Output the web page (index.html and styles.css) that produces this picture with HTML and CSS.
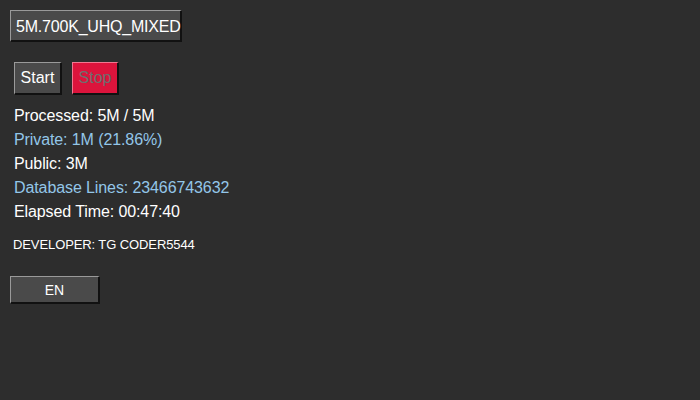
FILE: index.html
```html
<!DOCTYPE html>
<html>
<head>
<meta charset="utf-8">
<link rel="stylesheet" href="styles.css">
</head>
<body>
<div class="app">
  <div class="field">5M.700K_UHQ_MIXED</div>
  <div class="controls">
    <button class="btn start">Start</button>
    <button class="btn stop" disabled>Stop</button>
  </div>
  <div class="stats">
    <div class="line white">Processed: 5M / 5M</div>
    <div class="line blue">Private: 1M (21.86%)</div>
    <div class="line white">Public: 3M</div>
    <div class="line blue">Database Lines: 23466743632</div>
    <div class="line white">Elapsed Time: 00:47:40</div>
  </div>
  <div class="dev">DEVELOPER: TG CODER5544</div>
  <button class="lang">EN</button>
</div>
</body>
</html>
```
FILE: styles.css
```css
html, body {
  margin: 0;
  padding: 0;
  background: #2d2d2d;
  height: 100%;
}
body {
  font-family: "Liberation Sans", Arial, sans-serif;
  color: #ffffff;
}
.app {
  display: flex;
  flex-direction: column;
  align-items: flex-start;
  padding: 10px;
}
.field {
  box-sizing: border-box;
  width: 172px;
  height: 32px;
  background: #4a4a4a;
  border-style: solid;
  border-width: 1px 2px 2px 1px;
  border-color: #9a9a9a #111111 #111111 #9a9a9a;
  font-size: 16px;
  letter-spacing: -0.2px;
  line-height: 31px;
  padding-left: 5px;
  white-space: nowrap;
  color: #ffffff;
}
.controls {
  display: flex;
  gap: 10px;
  margin-top: 20px;
  margin-left: 4px;
}
.btn {
  box-sizing: border-box;
  height: 33px;
  font-family: "Liberation Sans", Arial, sans-serif;
  font-size: 16px;
  padding: 0 5px;
  border-style: solid;
  border-width: 1px 2px 2px 1px;
  margin: 0;
}
.start {
  width: 48px;
  background: #4a4a4a;
  color: #ffffff;
  border-color: #9a9a9a #111111 #111111 #9a9a9a;
}
.stop {
  width: 47px;
  background: #dc143c;
  color: #6e6e6e;
  border-color: #f07890 #111111 #111111 #f07890;
}
.stats {
  margin-top: 9px;
  margin-left: 4px;
  display: flex;
  flex-direction: column;
}
.line {
  font-size: 16px;
  letter-spacing: -0.1px;
  line-height: 24px;
  white-space: nowrap;
}
.white { color: #ffffff; }
.blue { color: #93c6e8; }
.dev {
  margin-top: 13px;
  margin-left: 3px;
  font-size: 13px;
  letter-spacing: -0.1px;
  line-height: 15px;
}
.lang {
  box-sizing: border-box;
  margin-top: 24px;
  width: 90px;
  height: 28px;
  background: #4a4a4a;
  color: #ffffff;
  font-family: "Liberation Sans", Arial, sans-serif;
  font-size: 14px;
  padding: 0;
  border-style: solid;
  border-width: 1px 2px 2px 1px;
  border-color: #9a9a9a #111111 #111111 #9a9a9a;
}
```
